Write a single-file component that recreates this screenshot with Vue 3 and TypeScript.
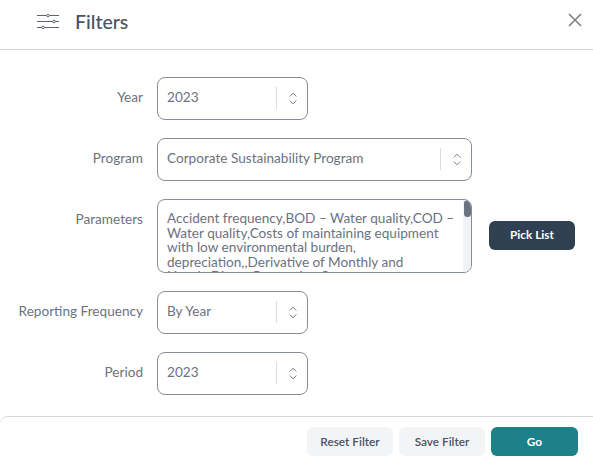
<script setup lang="ts">
interface Row { label: string; value: string; wide?: boolean }
const top: Row[] = [
  { label: 'Year', value: '2023' },
  { label: 'Program', value: 'Corporate Sustainability Program', wide: true },
]
const bottom: Row[] = [
  { label: 'Reporting Frequency', value: 'By Year' },
  { label: 'Period', value: '2023' },
]
const params = 'Accident frequency,BOD – Water quality,COD – Water quality,Costs of maintaining equipment with low environmental burden, depreciation,,Derivative of Monthly and Hourly\u00a0Direct\u00a0Generation Sum'
</script>

<template>
  <div class="modal">
    <header class="head">
      <svg class="filter-icon" width="22" height="15" viewBox="0 0 22 15" fill="none" stroke="#5d6470" stroke-width="1">
        <path d="M0 1.5h22M0 7.5h22M0 13.5h22" />
        <circle cx="11" cy="1.5" r="1.3" fill="#fff" />
        <circle cx="17" cy="7.5" r="1.3" fill="#fff" />
        <circle cx="6" cy="13.5" r="1.3" fill="#fff" />
      </svg>
      <h1 class="title">Filters</h1>
      <svg class="close" width="14" height="14" viewBox="0 0 14 14" stroke="#808080" stroke-width="1.6" fill="none">
        <path d="M1 1l12 12M13 1L1 13" />
      </svg>
    </header>
    <main class="body">
      <div v-for="r in top" :key="r.label" class="row">
        <label class="label">{{ r.label }}</label>
        <div class="select" :class="{ wide: r.wide }">
          <span class="val">{{ r.value }}</span>
          <span class="sep"></span>
          <svg class="chev" width="8" height="13" viewBox="0 0 8 13" fill="none" stroke="#747b85" stroke-width="1">
            <path d="M.7 4.5L4 1.2l3.3 3.3M.7 8.5L4 11.8l3.3-3.3" />
          </svg>
        </div>
      </div>
      <div class="row params">
        <label class="label plabel">Parameters</label>
        <div class="area">
          <div class="area-text">{{ params }}</div>
          <div class="track"><div class="thumb"></div></div>
        </div>
        <button class="pick">Pick List</button>
      </div>
      <div v-for="r in bottom" :key="r.label" class="row">
        <label class="label">{{ r.label }}</label>
        <div class="select">
          <span class="val">{{ r.value }}</span>
          <span class="sep"></span>
          <svg class="chev" width="8" height="13" viewBox="0 0 8 13" fill="none" stroke="#747b85" stroke-width="1">
            <path d="M.7 4.5L4 1.2l3.3 3.3M.7 8.5L4 11.8l3.3-3.3" />
          </svg>
        </div>
      </div>
    </main>
    <footer class="foot">
      <button class="btn light">Reset Filter</button>
      <button class="btn light">Save Filter</button>
      <button class="btn go">Go</button>
    </footer>
  </div>
</template>

<style>
html, body { margin: 0; background: #fff; }
</style>

<style scoped>
.modal {
  width: 593px;
  height: 460px;
  overflow: hidden;
  font-family: Lato, "Noto Sans", sans-serif;
  color: #6b7280;
  background: #fff;
  display: flex;
  flex-direction: column;
}
.head {
  height: 49px;
  flex: none;
  border-bottom: 1px solid #d4d4d4;
  display: flex;
  align-items: center;
  padding-left: 37px;
  padding-right: 11px;
}
.filter-icon { margin-right: 16px; margin-top: -7px; }
.title {
  margin: -6px 0 0;
  font-size: 19.5px;
  font-weight: 500;
  color: #4a5260;
  flex: 1;
}
.close { margin-top: -10px; }
.body {
  flex: none;
  padding-top: 27px;
  display: flex;
  flex-direction: column;
  gap: 18px;
  height: 366px;
  box-sizing: border-box;
}
.row { display: flex; align-items: center; }
.label {
  width: 143px;
  text-align: right;
  margin-right: 14px;
  padding-bottom: 3px;
  font-size: 13.6px;
  flex: none;
}
.select {
  width: 151px;
  height: 43px;
  box-sizing: border-box;
  border: 1px solid #868e96;
  border-radius: 8px;
  display: flex;
  align-items: center;
  padding: 0 10px 0 9px;
  font-size: 13.6px;
}
.select.wide { width: 315px; }
.val { flex: 1; padding-bottom: 3px; }
.sep { width: 1px; height: 22px; background: #d9dde1; margin-right: 12px; margin-bottom: 1px; }
.chev { flex: none; margin-bottom: 1px; }
.params { align-items: flex-start; height: 74px; }
.plabel { margin-top: 12px; padding-bottom: 0; }
.area {
  position: relative;
  width: 315px;
  height: 74px;
  box-sizing: border-box;
  border: 1px solid #868e96;
  border-radius: 8px;
  overflow: hidden;
}
.area-text {
  padding: 11px 14px 0 9px;
  font-size: 13.6px;
  line-height: 14.5px;
}
.track {
  position: absolute;
  right: 0;
  top: 0;
  bottom: 0;
  width: 8px;
  background: #f1f2f5;
}
.thumb {
  width: 7px;
  margin-left: 1px;
  height: 17px;
  background: #6b7280;
  border-radius: 4px;
}
.pick {
  margin: 22px 0 0 17px;
  width: 86px;
  height: 29px;
  padding-bottom: 4px;
  background: #2e4052;
  color: #fff;
  border: 0;
  border-radius: 6px;
  font: 700 11.8px Lato, sans-serif;
}
.foot {
  flex: 1;
  border-top: 1px solid #d3d9de;
  border-top-left-radius: 8px;
  display: flex;
  justify-content: flex-end;
  align-items: flex-start;
  gap: 6px;
  padding: 10px 15px 0 0;
}
.btn {
  width: 86px;
  height: 29px;
  border: 0;
  border-radius: 6px;
  font: 600 11.8px Lato, sans-serif;
}
.light { background: #f3f4f6; color: #4a5260; padding-bottom: 2px; }
.go { background: #1c8189; color: #fff; width: 87px; font-weight: 700; }
</style>
